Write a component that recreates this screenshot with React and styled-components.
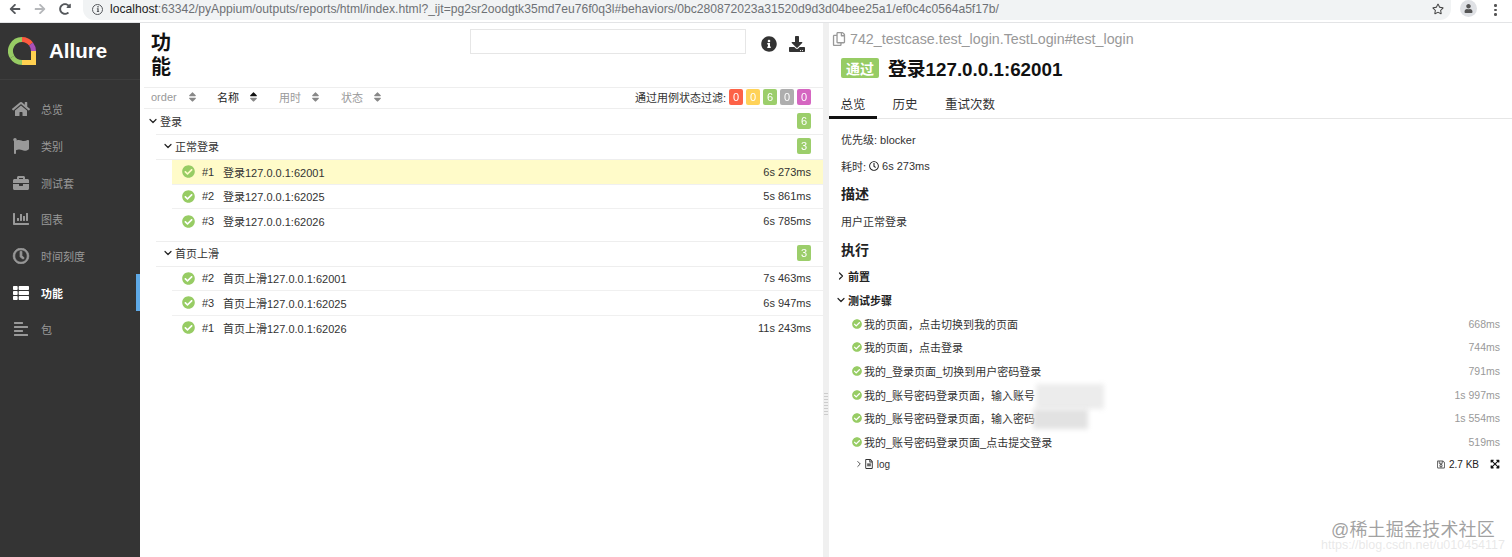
import React from 'react';
import styled, { createGlobalStyle } from 'styled-components';
import {
  FaHome, FaFlag, FaBriefcase, FaChartBar, FaThList, FaAlignLeft, FaInfoCircle,
  FaDownload, FaCheckCircle, FaSortUp, FaSortDown, FaRegClock, FaRegCopy,
  FaRegFileAlt, FaRegSave, FaExpandArrowsAlt, FaRegStar, FaUser, FaArrowLeft,
  FaArrowRight, FaRedoAlt, FaInfo,
} from 'react-icons/fa';
import { FiChevronDown, FiChevronRight } from 'react-icons/fi';

const GlobalStyle = createGlobalStyle`
  html, body { margin: 0; padding: 0; height: 100%; background: #fff; }
  body {
    font-family: "Liberation Sans", "Noto Sans CJK SC", Arial, sans-serif;
    font-size: 11px;
    color: #333;
    overflow: hidden;
  }
`;

const Page = styled.div`
  position: relative;
  width: 1512px;
  height: 557px;
  display: flex;
  flex-direction: column;
  overflow: hidden;
`;

// browser chrome
const Toolbar = styled.div`
  height: 23px;
  flex: none;
  display: flex;
  align-items: flex-start;
  padding-left: 9px;
  box-sizing: border-box;
  background: #fff;
  border-bottom: 1px solid #e3e4e6;
`;
const NavBtn = styled.span`
  width: 25px;
  height: 18px;
  display: flex;
  align-items: center;
  color: ${p => (p.$off ? '#b5b7ba' : '#55585c')};
  font-size: 12px;
`;
const UrlBar = styled.div`
  width: 1368px;
  height: 20px;
  margin-left: -1px;
  display: flex;
  align-items: center;
  background: #f1f3f4;
  border-radius: 0 0 11px 11px;
  padding: 0 7px 2px 9px;
  box-sizing: border-box;
  font-size: 12.13px;
  color: #6e7175;
  white-space: nowrap;
`;
const UrlInfo = styled.span`
  width: 11px;
  height: 11px;
  border: 1.5px solid #55585c;
  border-radius: 50%;
  display: flex;
  align-items: center;
  justify-content: center;
  font-size: 6px;
  color: #55585c;
  margin-right: 7px;
  box-sizing: border-box;
`;
const Host = styled.span`
  color: #222;
`;
const UrlText = styled.span`
  flex: 1;
`;
const StarIcon = styled(FaRegStar)`
  color: #444;
  font-size: 12px;
`;
const Avatar = styled.span`
  width: 17px;
  height: 17px;
  margin-left: 9px;
  border-radius: 50%;
  background: #dfe1e5;
  color: #555;
  font-size: 9px;
  display: flex;
  align-items: center;
  justify-content: center;
`;
const Dots = styled.span`
  margin: 4px 0 0 17px;
  display: flex;
  flex-direction: column;
  gap: 2px;
  i {
    width: 2.5px;
    height: 2.5px;
    border-radius: 50%;
    background: #555;
  }
`;

const Main = styled.div`
  flex: 1;
  display: flex;
  min-height: 0;
`;

// allure sidebar
const Sidebar = styled.aside`
  width: 140px;
  flex: none;
  background: #343434;
  display: flex;
  flex-direction: column;
`;
const Brand = styled.div`
  height: 57px;
  flex: none;
  display: flex;
  align-items: center;
  gap: 13px;
  padding-left: 8px;
  box-sizing: border-box;
  border-bottom: 1px solid #3e3e3e;
  color: #fff;
  font-size: 20.5px;
  font-weight: 700;
`;
const NavList = styled.nav`
  padding-top: 11px;
`;
const NavItem = styled.div`
  position: relative;
  height: 36.7px;
  display: flex;
  align-items: center;
  padding-left: 11.5px;
  color: ${p => (p.$active ? '#fff' : '#999')};
  font-size: 11px;
  font-weight: ${p => (p.$active ? 700 : 400)};
  svg {
    width: 18px;
    height: 16px;
    margin-right: 11.5px;
    color: ${p => (p.$active ? '#fff' : '#999')};
  }
  ${p => p.$active && 'border-right: 4px solid #5ea9e6;'}
`;
const ThickClock = styled(FaRegClock)`
  stroke: currentColor;
  stroke-width: 28;
`;

// left pane
const LeftPane = styled.section`
  width: 683px;
  flex: none;
  display: flex;
  flex-direction: column;
`;
const PaneHead = styled.div`
  height: 64px;
  flex: none;
  display: flex;
  padding: 6px 15px 0 11px;
  box-sizing: border-box;
`;
const PageTitle = styled.h2`
  width: 22px;
  margin: 2px 0 0;
  font-size: 20px;
  line-height: 24px;
  font-weight: 700;
  color: #111;
`;
const SearchInput = styled.div`
  width: 276px;
  height: 25px;
  margin-left: 297px;
  border: 1px solid #e6e6e6;
  box-sizing: border-box;
  flex: none;
`;
const HeadIcons = styled.div`
  display: flex;
  gap: 12px;
  margin-left: 15px;
  height: 30px;
  align-items: center;
  color: #333;
  svg { width: 16px; height: 16px; }
`;
const SortBar = styled.div`
  height: 22px;
  flex: none;
  margin-left: 4px;
  padding: 0 12px 2px 7px;
  display: flex;
  align-items: center;
  border-top: 1px solid #eee;
  border-bottom: 1px solid #eee;
  box-sizing: border-box;
`;
const SortCol = styled.span`
  width: ${p => p.$w}px;
  flex: none;
  display: flex;
  align-items: center;
  gap: ${p => p.$gap || 10}px;
  color: ${p => (p.$active ? '#222' : '#999')};
`;
const SortStack = styled.span`
  display: inline-flex;
  position: relative;
  width: 9px;
  height: 12px;
  color: #888;
  svg { position: absolute; left: 0; top: 0; width: 9px; height: 12px; }
  svg + svg { color: ${p => (p.$active ? '#111' : '#888')}; }
`;
const FilterLabel = styled.span`
  margin-left: auto;
  color: #333;
`;
const Badge = styled.span`
  width: 14px;
  height: 16px;
  border-radius: 2px;
  margin-left: 3px;
  background: ${p => p.$c};
  color: #fff;
  display: flex;
  align-items: center;
  justify-content: center;
  font-size: 11px;
  opacity: 0.95;
`;
const GroupRow = styled.div`
  height: ${p => p.$h}px;
  margin-left: ${p => p.$indent}px;
  padding: 0 12px 2px ${p => p.$pad}px;
  display: flex;
  align-items: center;
  gap: 1px;
  border-bottom: ${p => (p.$top ? '1px solid #eee' : 'none')};
  border-top: ${p => (p.$top ? '1px solid #eee' : 'none')};
  box-sizing: border-box;
  color: #333;
  svg { width: 12px; height: 12px; color: #222; stroke-width: 2.4; }
`;
const CountBadge = styled(Badge)`
  margin-left: auto;
  background: #97cc64;
`;
const TestRow = styled.div`
  height: 24.5px;
  margin-left: 32px;
  padding: 0 12px 0 10px;
  display: flex;
  align-items: center;
  box-sizing: border-box;
  background: ${p => (p.$selected ? '#fffbc9' : 'transparent')};
  border-bottom: ${p => (p.$last ? 'none' : '1px solid #f0f0f0')};
`;
const PassIcon = styled(FaCheckCircle)`
  width: ${p => p.$s || 13}px;
  height: ${p => p.$s || 13}px;
  color: #97cc64;
  flex: none;
`;
const TestNo = styled.span`
  width: 21px;
  margin-left: 7px;
  color: #333;
`;
const TestName = styled.span`
  flex: 1;
`;
const Spacer = styled.div`
  height: ${p => p.$h}px;
`;

const Gutter = styled.div`
  width: 6px;
  flex: none;
  background: #f0f0f0;
  display: flex;
  align-items: center;
  justify-content: center;
  padding-top: 229px;
  box-sizing: border-box;
  &::before {
    content: '';
    width: 4px;
    height: 24px;
    background: repeating-linear-gradient(#ccc 0 1px, transparent 1px 3px);
  }
`;

// right pane
const RightPane = styled.section`
  flex: 1;
  min-width: 0;
`;
const FullName = styled.div`
  height: 32px;
  padding-left: 3px;
  display: flex;
  align-items: center;
  gap: 4px;
  font-size: 14.25px;
  color: #999;
  svg { width: 14px; height: 14px; }
`;
const Heading = styled.div`
  height: 25px;
  padding-left: 12px;
  display: flex;
  align-items: center;
  gap: 9px;
  font-size: 18.8px;
  font-weight: 700;
  color: #111;
`;
const StatusTag = styled.span`
  width: 38px;
  height: 20px;
  border-radius: 2px;
  background: #97cc64;
  color: #fff;
  font-size: 14px;
  font-weight: 700;
  display: flex;
  align-items: center;
  justify-content: center;
`;
const Tabs = styled.div`
  height: 38px;
  margin-top: 1px;
  display: flex;
  border-bottom: 1px solid #e6e6e6;
  box-sizing: border-box;
`;
const Tab = styled.div`
  width: ${p => p.$w}px;
  display: flex;
  align-items: center;
  justify-content: center;
  font-size: 12.5px;
  padding-top: 10px;
  color: #333;
  box-sizing: border-box;
  border-bottom: 3px solid ${p => (p.$active ? '#111' : 'transparent')};
  margin-bottom: -1px;
`;
const Body = styled.div`
  padding: 6px 12px 0;
`;
const Line = styled.div`
  height: ${p => p.$h}px;
  display: flex;
  align-items: center;
  gap: 3px;
  color: #333;
  svg { width: 10px; height: 10px; color: #222; }
`;
const SectionTitle = styled(Line)`
  font-size: 14px;
  font-weight: 700;
  color: #222;
`;
const Fold = styled(Line)`
  margin-left: -6px;
  gap: 1px;
  font-weight: 700;
  color: #222;
  svg { width: 12px; height: 12px; stroke-width: 2.4; }
`;
const Step = styled.div`
  height: 23.6px;
  display: flex;
  align-items: center;
  gap: 2px;
  padding: 0 0 0 11px;
  color: #333;
`;
const StepTime = styled.span`
  margin-left: auto;
  font-size: 10.5px;
  color: #999;
`;
const LogRow = styled.div`
  height: 21px;
  display: flex;
  align-items: center;
  padding-left: 13px;
  font-size: 10px;
  color: #333;
  svg { width: 10px; height: 10px; }
`;
const LogMeta = styled.span`
  margin-left: auto;
  display: flex;
  align-items: center;
  gap: 1px;
  font-size: 10px;
  color: #222;
  svg { width: 8px; height: 9px; color: #555; }
`;
const ExpandIcon = styled(FaExpandArrowsAlt)`
  margin-left: 10px;
  && { width: 10px; height: 10px; color: #111; }
`;
const Blur = styled.div`
  position: absolute;
  left: ${p => p.$x}px;
  top: ${p => p.$y}px;
  width: ${p => p.$w}px;
  height: ${p => p.$h}px;
  background: ${p => p.$c};
  filter: blur(2.5px);
`;
const Watermark = styled.div`
  position: absolute;
  right: 17px;
  bottom: 16px;
  font-size: 18px;
  letter-spacing: 0.2px;
  color: rgba(130, 130, 130, 0.75);
`;
const WatermarkUrl = styled.div`
  position: absolute;
  right: 7px;
  bottom: 5px;
  font-size: 12.5px;
  color: rgba(190, 190, 190, 0.35);
`;

const NAV = [
  { icon: FaHome, label: '总览' },
  { icon: FaFlag, label: '类别' },
  { icon: FaBriefcase, label: '测试套' },
  { icon: FaChartBar, label: '图表' },
  { icon: ThickClock, label: '时间刻度' },
  { icon: FaThList, label: '功能', active: true },
  { icon: FaAlignLeft, label: '包' },
];
const LOGIN = [
  ['#1', '登录127.0.0.1:62001', '6s 273ms', true],
  ['#2', '登录127.0.0.1:62025', '5s 861ms'],
  ['#3', '登录127.0.0.1:62026', '6s 785ms'],
];
const SCROLL = [
  ['#2', '首页上滑127.0.0.1:62001', '7s 463ms'],
  ['#3', '首页上滑127.0.0.1:62025', '6s 947ms'],
  ['#1', '首页上滑127.0.0.1:62026', '11s 243ms'],
];
const STEPS = [
  ['我的页面，点击切换到我的页面', '668ms'],
  ['我的页面，点击登录', '744ms'],
  ['我的_登录页面_切换到用户密码登录', '791ms'],
  ['我的_账号密码登录页面，输入账号', '1s 997ms'],
  ['我的_账号密码登录页面，输入密码', '1s 554ms'],
  ['我的_账号密码登录页面_点击提交登录', '519ms'],
];

const Logo = () => (
  <svg width="28" height="28" viewBox="0 0 28 28" fill="none" strokeWidth="5">
    <path d="M4.2 20A11.5 11.5 0 0 1 14 2.5" stroke="#97cc64" />
    <path d="M14 2.5A11.5 11.5 0 0 1 23 7" stroke="#fd5a3e" />
    <path d="M23 7A11.5 11.5 0 0 1 25.5 14" stroke="#aa50b8" />
    <path d="M4.2 20A11.5 11.5 0 0 0 14 25.5" stroke="#97cc64" />
    <path d="M14 25.5H25.5V14" stroke="#ffd050" />
  </svg>
);

const SortIcon = ({ active }) => (
  <SortStack $active={active}>
    <FaSortDown />
    <FaSortUp />
  </SortStack>
);

const Tests = ({ rows }) => rows.map(([no, name, time, selected], i) => (
  <TestRow key={name} $selected={selected} $last={i === rows.length - 1}>
    <PassIcon />
    <TestNo>{no}</TestNo>
    <TestName>{name}</TestName>
    {time}
  </TestRow>
));

export default function App() {
  return (
    <Page>
      <GlobalStyle />
      <Toolbar>
        <NavBtn><FaArrowLeft /></NavBtn>
        <NavBtn $off><FaArrowRight /></NavBtn>
        <NavBtn><FaRedoAlt /></NavBtn>
        <UrlBar>
          <UrlInfo><FaInfo /></UrlInfo>
          <UrlText>
            <Host>localhost</Host>:63342/pyAppium/outputs/reports/html/index.html?_ijt=pg2sr2oodgtk35md7eu76f0q3l#behaviors/0bc280872023a31520d9d3d04bee25a1/ef0c4c0564a5f17b/
          </UrlText>
          <StarIcon />
        </UrlBar>
        <Avatar><FaUser /></Avatar>
        <Dots><i /><i /><i /></Dots>
      </Toolbar>
      <Main>
        <Sidebar>
          <Brand><Logo />Allure</Brand>
          <NavList>
            {NAV.map(({ icon: Icon, label, active }) => (
              <NavItem key={label} $active={active}><Icon />{label}</NavItem>
            ))}
          </NavList>
        </Sidebar>
        <LeftPane>
          <PaneHead>
            <PageTitle>功能</PageTitle>
            <SearchInput />
            <HeadIcons><FaInfoCircle /><FaDownload /></HeadIcons>
          </PaneHead>
          <SortBar>
            <SortCol $w={66} $gap={11}>order<SortIcon /></SortCol>
            <SortCol $w={62} $active>名称<SortIcon active /></SortCol>
            <SortCol $w={62}>用时<SortIcon /></SortCol>
            <SortCol $w={62}>状态<SortIcon /></SortCol>
            <FilterLabel>通过用例状态过滤:</FilterLabel>
            <Badge $c="#fd5a3e">0</Badge>
            <Badge $c="#ffd050">0</Badge>
            <Badge $c="#97cc64">6</Badge>
            <Badge $c="#aaa">0</Badge>
            <Badge $c="#d35ebe">0</Badge>
          </SortBar>
          <GroupRow $indent={4} $pad={3} $h={25}>
            <FiChevronDown />登录<CountBadge>6</CountBadge>
          </GroupRow>
          <GroupRow $indent={16} $pad={6} $h={26} $top>
            <FiChevronDown />正常登录<CountBadge>3</CountBadge>
          </GroupRow>
          <Tests rows={LOGIN} />
          <Spacer $h={7} />
          <GroupRow $indent={16} $pad={6} $h={26} $top>
            <FiChevronDown />首页上滑<CountBadge>3</CountBadge>
          </GroupRow>
          <Tests rows={SCROLL} />
        </LeftPane>
        <Gutter />
        <RightPane>
          <FullName><FaRegCopy />742_testcase.test_login.TestLogin#test_login</FullName>
          <Heading><StatusTag>通过</StatusTag>登录127.0.0.1:62001</Heading>
          <Tabs>
            <Tab $w={48} $active>总览</Tab>
            <Tab $w={56}>历史</Tab>
            <Tab $w={74}>重试次数</Tab>
          </Tabs>
          <Body>
            <Line $h={28}>优先级: blocker</Line>
            <Line $h={26}>耗时: <FaRegClock /> 6s 273ms</Line>
            <SectionTitle $h={28}>描述</SectionTitle>
            <Line $h={28}>用户正常登录</Line>
            <SectionTitle $h={28}>执行</SectionTitle>
            <Fold $h={26}><FiChevronRight />前置</Fold>
            <Fold $h={22}><FiChevronDown />测试步骤</Fold>
            <Spacer $h={1} />
            {STEPS.map(([name, time]) => (
              <Step key={name}>
                <PassIcon $s={10} />{name}<StepTime>{time}</StepTime>
              </Step>
            ))}
            <LogRow>
              <FiChevronRight />
              <FaRegFileAlt />&nbsp;log
              <LogMeta><FaRegSave />&nbsp;2.7 KB<ExpandIcon /></LogMeta>
            </LogRow>
          </Body>
        </RightPane>
      </Main>
      <Blur $x={1036} $y={384} $w={68} $h={25} $c="#ececec" />
      <Blur $x={1033} $y={409} $w={55} $h={20} $c="#e2e2e2" />
      <Watermark>@稀土掘金技术社区</Watermark>
      <WatermarkUrl>https://blog.csdn.net/u010454117</WatermarkUrl>
    </Page>
  );
}
